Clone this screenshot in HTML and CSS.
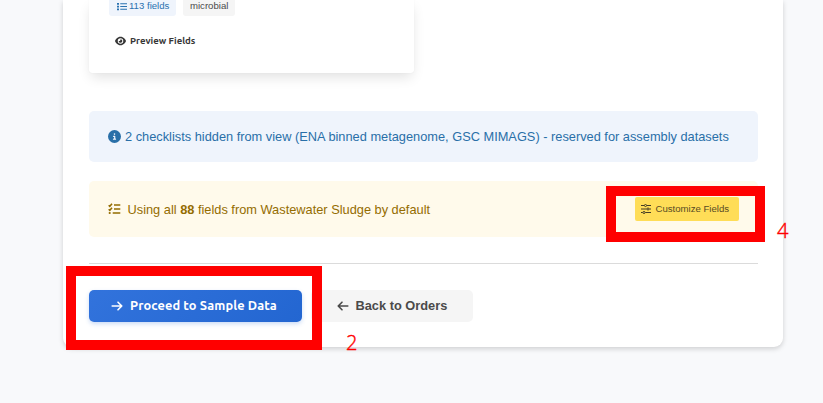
FILE: index.html
```html
<!DOCTYPE html>
<html lang="en">
<head>
<meta charset="utf-8">
<title>Checklist selection</title>
<link rel="stylesheet" href="styles.css">
</head>
<body>
<main class="box">
  <section class="card">
    <div class="tags">
      <span class="tag tag-info"><svg class="i-list" viewBox="0 0 20 16"><path d="M0 1h4v3.500H0zM0 6.500h4V10H0zM0 12h4v3.500H0zM6.500 1.700H20v2H6.500zM6.500 7.200H20v2H6.500zM6.500 12.700H20v2H6.500z"/></svg>113 fields</span>
      <span class="tag">microbial</span>
    </div>
    <a class="preview"><svg class="i-eye" viewBox="0 0 576 512"><path fill-rule="evenodd" d="M288 32c-81 0-146 37-193 80C49 156 18 208 3 244c-3 8-3 17 0 24 15 36 46 88 92 132 47 43 112 80 193 80s146-37 193-80c46-44 77-96 92-132 3-7 3-16 0-24-15-36-46-88-92-132-47-43-112-80-193-80zM144 256a144 144 0 1 1 288 0 144 144 0 1 1-288 0zm144-64c0 35-29 64-64 64-7 0-14-1-20-3-6-2-12 1-12 7 0 3 0 7 1 10a96 96 0 1 0 102-109c-6 0-9 6-7 11z"/></svg>Preview Fields</a>
  </section>
  <div class="note note-info"><svg class="i-info" viewBox="0 0 512 512"><path fill-rule="evenodd" d="M256 512A256 256 0 1 0 256 0a256 256 0 1 0 0 512zM216 336h24v-64h-24c-13 0-24-11-24-24s11-24 24-24h48c13 0 24 11 24 24v88h8c13 0 24 11 24 24s-11 24-24 24h-80c-13 0-24-11-24-24s11-24 24-24zm40-208a32 32 0 1 1 0 64 32 32 0 1 1 0-64z"/></svg><span>2 checklists hidden from view (ENA binned metagenome, GSC MIMAGS) - reserved for assembly datasets</span></div>
  <div class="note note-warn">
    <svg class="i-check" viewBox="0 0 13 12"><path d="M.7 2.200l1.100 1.100L4 .8M.7 6.200l1.100 1.100L4 4.800M6 2h6.300M6 6h6.300M4.700 10h7.600"/><circle cx="1.700" cy="10" r="1.100"/></svg>
    <span class="summary">Using all <strong>88</strong> fields from Wastewater Sludge by default</span>
    <button class="customize"><svg class="i-sliders" viewBox="0 0 10 10"><path d="M0 1.500h3.200M5.800 1.500H10M0 5h5.700M8.300 5H10M0 8.500h1.700M4.300 8.500H10"/><circle cx="4.500" cy="1.500" r="1.050"/><circle cx="7" cy="5" r="1.050"/><circle cx="3" cy="8.500" r="1.050"/></svg>Customize Fields</button>
  </div>
  <hr>
  <div class="buttons">
    <button class="btn proceed"><svg class="i-arrow" viewBox="0 0 12 12"><path d="M1.200 6h9.600M7 2.200L10.800 6 7 9.800"/></svg><span>Proceed to Sample Data</span></button>
    <button class="btn back"><svg class="i-arrow" viewBox="0 0 12 12"><path d="M10.800 6H1.200M5 2.200L1.200 6 5 9.800"/></svg><span>Back to Orders</span></button>
  </div>
</main>
<div class="mark mark-proceed"></div>
<div class="mark mark-customize"></div>
<span class="num num-2">2</span>
<span class="num num-4">4</span>
</body>
</html>
```
FILE: styles.css
```css
* { box-sizing: border-box; }
html, body { height: 100%; overflow: hidden; }
body {
  margin: 0;
  position: relative;
  background: #f8f9fb;
  font: 12.800px/20px "Liberation Sans", Arial, sans-serif;
  color: #4a4a4a;
}
svg { flex: none; fill: currentColor; }
button { border: 0; font: inherit; color: inherit; }
.box {
  width: 720px;
  height: 347px;
  margin-left: 63px;
  padding: 0 25px 0 26px;
  background: #fff;
  border-radius: 0 0 9px 9px;
  box-shadow: 0 2px 5px rgba(10, 10, 10, .17);
}
.card {
  width: 325px;
  height: 73px;
  padding-left: 20px;
  border-radius: 0 0 3px 3px;
  box-shadow: 0 6px 13px -2px rgba(10, 10, 10, .12), 0 0 1px rgba(10, 10, 10, .1);
}
.tags { display: flex; gap: 7px; height: 16px; align-items: flex-end; }
.tag {
  display: flex;
  align-items: center;
  height: 20px;
  padding: 0 7px;
  border-radius: 3px;
  background: #f5f5f5;
  font-size: 9.600px;
  white-space: nowrap;
}
.tag-info { width: 67px; padding-right: 0; background: #eff4fc; color: #2a72b0; }
.i-list { width: 10px; height: 9px; margin: 1px 2px 0 1px; }
.preview {
  display: flex;
  align-items: center;
  height: 20px;
  margin: 15px 0 0 6px;
  font: 700 9.600px/20px Ubuntu, "Noto Sans", sans-serif;
  color: #363636;
}
.i-eye { width: 11px; height: 10px; margin-right: 4px; }
.note { display: flex; align-items: center; padding: 0 19px; border-radius: 5px; }
.note-info { height: 51px; margin-top: 38px; background: #eff4fc; color: #296fa8; }
.i-info { width: 13px; height: 13px; margin-right: 4px; }
.note-warn { height: 56px; margin-top: 19px; background: #fffaeb; color: #946c00; }
.i-check { width: 13px; height: 12px; margin-right: 6.500px; }
.summary { padding-top: 2px; }
.i-check path, .i-sliders path { fill: none; stroke: currentColor; stroke-width: 1.400; }
.i-check path { stroke-width: 1.600; }
.customize {
  display: flex;
  align-items: center;
  width: 104px;
  height: 24px;
  margin-left: auto;
  padding: 0 0 0 6px;
  border-radius: 2px;
  background: #ffdd57;
  color: #584b24;
  font-size: 9.600px;
}
.i-sliders { width: 10px; height: 10px; margin-right: 4.500px; color: #443c25; }
.i-sliders circle { fill: none; stroke: currentColor; }
.i-sliders path { stroke-width: 1.200; }
hr { height: 1px; margin: 26px 0; border: 0; background: #dbdbdb; }
.buttons { display: flex; gap: 9px; }
.btn { display: flex; align-items: center; height: 32px; padding: 0 0 0 22px; border-radius: 5px; font-weight: 700; }
.i-arrow { width: 12px; height: 12px; margin-right: 6.500px; }
.i-arrow path { fill: none; stroke: currentColor; stroke-width: 1.600; stroke-linecap: round; stroke-linejoin: round; }
.proceed {
  width: 213px;
  background: linear-gradient(135deg, #3273dc, #2366d1);
  color: #fff;
  font-family: Ubuntu, "Noto Sans", sans-serif;
  letter-spacing: .11px;
  box-shadow: 0 2px 4px rgba(50, 115, 220, .25);
}
.proceed span { padding-bottom: 2px; }
.proceed .i-arrow { margin-right: 7px; }
.back { width: 162px; padding-left: 26px; background: #f5f5f5; }
.mark { position: absolute; border: 10px solid #f00; }
.mark-proceed { left: 66px; top: 266px; width: 256px; height: 84px; }
.mark-customize { left: 606px; top: 186px; width: 159px; height: 56px; }
.num { position: absolute; font: 300 20px/20px "Open Sans", "Noto Sans", sans-serif; color: #f00; -webkit-text-stroke: .4px #f00; }
.num-2 { left: 346px; top: 333px; }
.num-4 { left: 777px; top: 221px; }
```
